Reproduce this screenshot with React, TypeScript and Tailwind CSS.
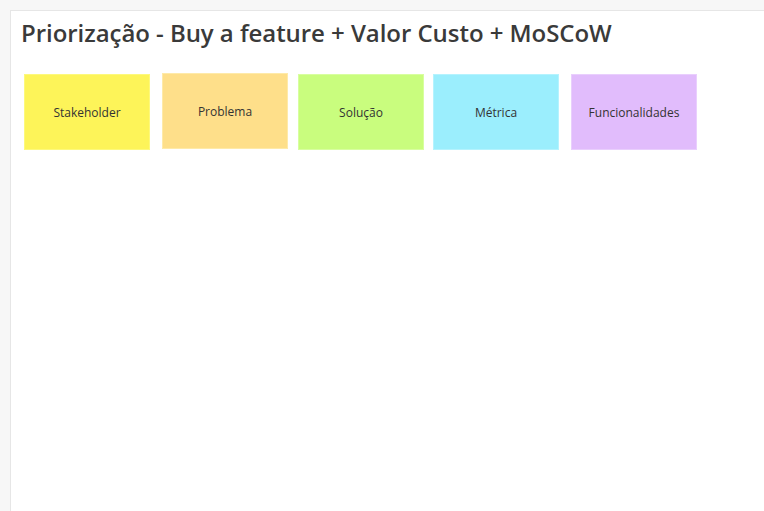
import React from 'react';

const stickies = [
  { label: 'Stakeholder', cls: 'bg-[#fdf459] border-[#fdf97c]' },
  { label: 'Problema', cls: 'bg-[#fedf8a] border-[#feeaa9] -mt-px ml-[12px]' },
  { label: 'Solução', cls: 'bg-[#c9fd7e] border-[#d8fea0] ml-[10px]' },
  { label: 'Métrica', cls: 'bg-[#9beefd] border-[#b5f3fe] ml-[9px]' },
  { label: 'Funcionalidades', cls: 'bg-[#e1bcfc] border-[#e9cffd] ml-[12px]' },
];

const App: React.FC = () => {
  return (
    <div className="w-[764px] h-[511px] bg-[#f7f7f7] pt-[10px] pl-[10px] overflow-hidden">
      <div className="h-full bg-white border-t border-l border-[#e6e6e6] pl-[10px] pt-[6px]" style={{ fontFamily: '"Open Sans", sans-serif' }}>
        <h1 className="text-[24px] leading-[32px] font-semibold text-[#3a3a3a] tracking-[-0.05px]">
          Priorização - Buy a feature + Valor Custo + MoSCoW
        </h1>
        <div className="flex mt-[25px] pl-[3px]">
          {stickies.map((s) => (
            <div
              key={s.label}
              className={`w-[126px] h-[76px] border flex items-center justify-center pt-[2px] text-[12px] text-[#333] ${s.cls}`}
            >
              {s.label}
            </div>
          ))}
        </div>
      </div>
    </div>
  );
};

export default App;
